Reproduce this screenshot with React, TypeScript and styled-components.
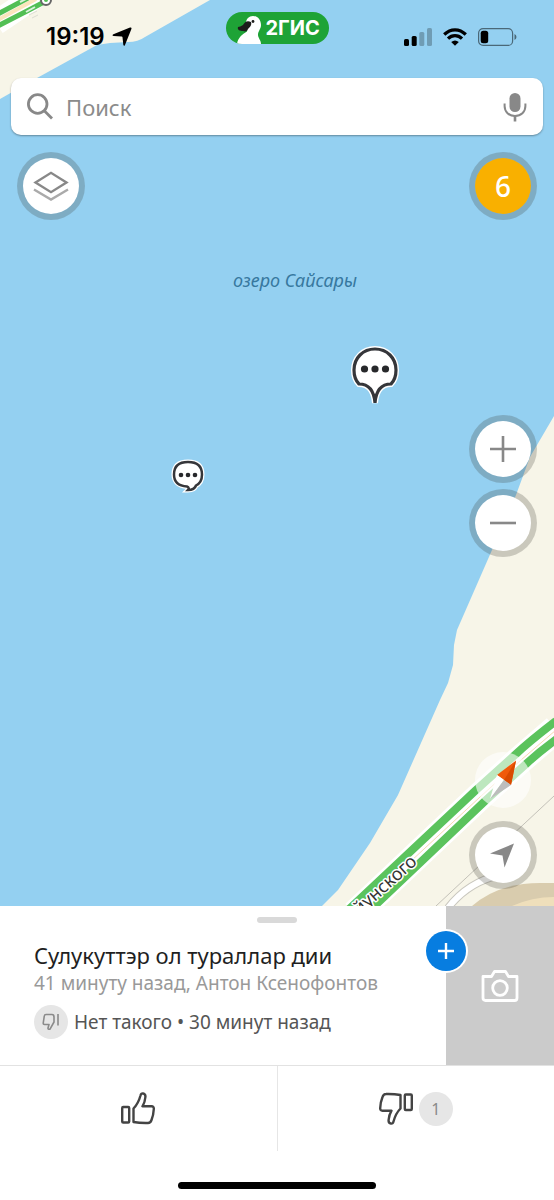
import React from "react";
import styled, { createGlobalStyle } from "styled-components";

const GlobalStyle = createGlobalStyle`
  * { box-sizing: border-box; }
  body { margin: 0; background: #fff; font-family: "Noto Sans", sans-serif; }
  button, input { font: inherit; color: inherit; border: 0; padding: 0; background: none; }
  button { cursor: pointer; }
  svg { display: block; flex: none; }
`;

const Page = styled.div`
  display: flex;
  flex-direction: column;
  min-height: 100vh;
`;

const MapArea = styled.main`
  position: relative;
  flex: 1;
  display: flex;
  flex-direction: column;
  overflow: hidden;
  background: #94d0f1;
`;

const MapDrawing = styled.svg`
  position: absolute;
  inset: 0;
  width: 100%;
  height: 100%;
`;

const StatusBar = styled.header`
  position: relative;
  display: grid;
  grid-template-columns: 1fr auto 1fr;
  height: 78px;
  padding-top: 12px;
`;

const StatusSide = styled.div<{ $end?: boolean }>`
  display: flex;
  align-items: center;
  justify-content: ${(p) => (p.$end ? "flex-end" : "flex-start")};
  gap: ${(p) => (p.$end ? 11 : 7)}px;
  height: 50px;
  padding: ${(p) => (p.$end ? "0 37px 0 0" : "0 0 0 46px")};
`;

const Time = styled.time`
  font: 600 24px/28px Inter, sans-serif;
  color: #000;
`;

const AppPill = styled.a`
  display: flex;
  align-items: center;
  width: 103px;
  height: 32px;
  border-radius: 16px;
  overflow: hidden;
  background: #1ea336;
  color: #fff;
  font: 700 20px/32px Inter, sans-serif;
  text-decoration: none;
`;

const SearchBar = styled.form`
  position: relative;
  display: flex;
  align-items: center;
  gap: 13px;
  height: 57px;
  margin: 0 11px;
  padding: 0 16px;
  border-radius: 10px;
  background: #fff;
  box-shadow: 0 1px 2px rgba(0, 0, 0, 0.35);
`;

const SearchInput = styled.input`
  flex: 1;
  min-width: 0;
  height: 100%;
  outline: 0;
  font-size: 22px;
  color: #333;
  &::placeholder { color: #8b8b8b; opacity: 1; }
`;

const Controls = styled.div`
  position: relative;
  flex: 1;
  display: flex;
  justify-content: space-between;
  padding: 17px;
`;

const ControlColumn = styled.div`
  display: flex;
  flex-direction: column;
  align-items: center;
  justify-content: space-between;
`;

const ControlGroup = styled.div<{ $gap: number }>`
  display: flex;
  flex-direction: column;
  align-items: center;
  gap: ${(p) => p.$gap}px;
`;

const RoundButton = styled.button<{ $fill?: string }>`
  display: flex;
  align-items: center;
  justify-content: center;
  width: 68px;
  height: 68px;
  border: 6px solid rgba(60, 60, 50, 0.24);
  border-radius: 50%;
  background: ${(p) => p.$fill || "#fff"};
  background-clip: padding-box;
  color: #fff;
  font-size: 28px;
  font-weight: 500;
  line-height: 56px;
`;

const CompassButton = styled.button`
  width: 56px;
  height: 56px;
  border-radius: 50%;
  background: rgba(255, 255, 255, 0.6);
`;

const Pin = styled.button<{ $x: number; $y: number }>`
  position: absolute;
  left: ${(p) => p.$x}%;
  top: ${(p) => p.$y}%;
  transform: translate(-50%, -50%);
`;

const Panel = styled.section`
  position: relative;
  background: #fff;
`;

const Handle = styled.div`
  position: absolute;
  top: 11px;
  left: 50%;
  width: 40px;
  height: 6px;
  margin-left: -20px;
  border-radius: 3px;
  background: #d9d9d9;
`;

const Summary = styled.div`
  display: flex;
  border-bottom: 1px solid #e2e2e2;
`;

const Info = styled.div`
  flex: 1;
  min-width: 0;
  padding: 35px 0 26px 34px;
`;

const Title = styled.h1`
  margin: 0;
  font-size: 22px;
  font-weight: 400;
  line-height: 28px;
  color: #1f1f1f;
`;

const Meta = styled.p`
  margin: 0 0 8px;
  font-size: 19px;
  line-height: 28px;
  color: #999;
`;

const Verdict = styled.div`
  display: flex;
  align-items: center;
  gap: 6px;
  font-size: 19px;
  line-height: 28px;
  color: #555;
`;

const Bubble = styled.span`
  display: flex;
  align-items: center;
  justify-content: center;
  width: 34px;
  height: 34px;
  border-radius: 50%;
  background: #e6e6e6;
  color: #8a8a8a;
  font-size: 16px;
`;

const Photo = styled.div`
  position: relative;
  display: flex;
  width: 108px;
  background: #cbcbcb;
`;

const PhotoButton = styled.button`
  flex: 1;
  display: flex;
  align-items: center;
  justify-content: center;
`;

const AddButton = styled.button`
  position: absolute;
  top: 25px;
  left: -20px;
  display: flex;
  align-items: center;
  justify-content: center;
  width: 40px;
  height: 40px;
  border-radius: 50%;
  background: #077de0;
  box-shadow: 0 0 0 2px #fff;
`;

const Actions = styled.div`
  display: flex;
`;

const Action = styled.button`
  flex: 1;
  display: flex;
  align-items: center;
  justify-content: center;
  gap: 6px;
  height: 85px;
  & + & { border-left: 1px solid #e6e6e6; }
`;

const HomeArea = styled.div`
  display: flex;
  justify-content: center;
  padding: 31px 0 11px;
`;

const HomeIndicator = styled.div`
  width: 198px;
  height: 7px;
  border-radius: 4px;
  background: #000;
`;

function CityMap() {
  return (
    <MapDrawing viewBox="0 0 554 906" preserveAspectRatio="xMidYMid slice" aria-hidden="true">
      <rect width="554" height="906" fill="#94d0f1" />
      <path d="M0 0H210L145 37Q138 42 128 42L110 43L97 45L37 78L0 99Z" fill="#f7f5e8" />
      <path d="M554 416L530 457L516 495L492 550L457 630L454 645L453 665L448 683L440 700L398 795L370 843L338 890L322 906H554Z" fill="#f7f5e8" />

      <g fill="none">
        <path d="M-4 23L36 -4" stroke="#fff" strokeWidth="24" />
        <path d="M-4 21L36 -1" stroke="#fbe5bd" strokeWidth="4" />
        <path d="M-4 15L28 -2" stroke="#52bf55" strokeWidth="5" />
        <path d="M-4 27L27 11L46 1" stroke="#52bf55" strokeWidth="5" />
        <path d="M20 2l8-4M26 12l9-5" stroke="#d9f2da" strokeWidth="2" />
        <path d="M29 15l8-4M32 18l6-3" stroke="#dddcd3" />
        <circle cx="46" cy="0" r="5" fill="#fff" stroke="#666" strokeWidth="2" />
        <circle cx="46" cy="0" r="2" fill="#52bf55" />
      </g>

      <g fill="none">
        <path d="M436 906L554 796" stroke="#c3c1b8" />
        <path d="M448 908Q468 882 500 875T554 862" stroke="#c9c7be" strokeWidth="8" />
        <path d="M448 908Q468 882 500 875T554 862" stroke="#fff" strokeWidth="6" />
        <path d="M508 856H554V884Q530 880 508 886Z" fill="#f7f5e8" />
        <path d="M472 906Q498 883 540 883H554V906Z" fill="#d9ccae" />
        <path d="M512 906Q532 897 554 897V906Z" fill="#efdfbb" />
      </g>

      <g fill="none">
        <path d="M556 729L521 759L480 796L355 914" stroke="#fff" strokeWidth="28" />
        <path d="M556 721Q530 741 516 754L475 791L346 912" stroke="#5bc35d" strokeWidth="8" />
        <path d="M558 738Q540 751 526 764L485 801L364 916" stroke="#5bc35d" strokeWidth="8" />
        <path d="M556 730L521 760L480 797L410 862" stroke="#f7d9b0" />
      </g>
      <text
        transform="translate(418 863) rotate(-42)"
        textAnchor="end"
        fontFamily="Noto Sans, sans-serif"
        fontSize="18"
        fill="#333"
        stroke="#fff"
        strokeWidth="3"
        strokeLinejoin="round"
        paintOrder="stroke"
      >
        Ойунского
      </text>
      <text
        x="295"
        y="287"
        textAnchor="middle"
        fontFamily="Noto Sans, sans-serif"
        fontSize="18"
        fontStyle="italic"
        fill="#37789f"
      >
        озеро Сайсары
      </text>
    </MapDrawing>
  );
}

function LargePinIcon() {
  const shape =
    "M25 3C13 3 4 12 4 24C4 30 6 35 9 38C18 38 24 44 25 57C26 44 32 38 41 38C44 35 46 30 46 24C46 12 37 3 25 3Z";
  return (
    <svg width="50" height="60" viewBox="0 0 50 60" fill="none">
      <path d={shape} stroke="#fff" strokeWidth="6" />
      <path d={shape} fill="#fff" stroke="#35363a" strokeWidth="3.200" />
      <g fill="#27282b">
        <circle cx="14.500" cy="23" r="3.600" />
        <circle cx="25" cy="23" r="3.600" />
        <circle cx="35.500" cy="23" r="3.600" />
      </g>
    </svg>
  );
}

function SmallPinIcon() {
  const shape =
    "M17 3C7 3 3 8 3 15.500C3 23 8 27 16 27.500C18 28 18 30 17 31C21 31 24 29.500 25 26.500C29 24.500 31 21 31 15.500C31 8 27 3 17 3Z";
  return (
    <svg width="34" height="36" viewBox="0 0 34 36" fill="none">
      <path d={shape} stroke="#fff" strokeWidth="5" />
      <path d={shape} fill="#fff" stroke="#35363a" strokeWidth="2.500" />
      <g fill="#27282b">
        <circle cx="10" cy="16" r="2.300" />
        <circle cx="17" cy="16" r="2.300" />
        <circle cx="24" cy="16" r="2.300" />
      </g>
    </svg>
  );
}

function ThumbIcon({ down }: { down?: boolean }) {
  return (
    <svg width="34" height="33" viewBox="0 0 34 33" fill="none" stroke="#444" strokeWidth="2.400" strokeLinejoin="round">
      <g transform={down ? "rotate(180 17 16.500)" : undefined}>
        <rect x="1.200" y="15" width="7" height="15.500" rx="1" />
        <path d="M12.500 16.500C16 13 18 9 19.500 3.500Q20 1.200 22 1.400Q24.700 2 24.400 5Q24 10 21.500 14.300H30.500Q33 14.300 32.800 17Q32.500 23 30.500 28Q29.500 31 27 31Q19 31.200 12.500 30Z" />
      </g>
    </svg>
  );
}

export default function App() {
  return (
    <>
      <GlobalStyle />
      <Page>
        <MapArea>
          <CityMap />
          <StatusBar>
            <StatusSide>
              <Time>19:19</Time>
              <svg width="20" height="20" viewBox="0 0 20 20" fill="#000">
                <path d="M18 .5Q20 0 19.400 2L13 18Q12 19.800 11.300 17.800L10.500 10.200Q10.400 9.500 9.700 9.400L1.700 8.900Q-.5 8.400 1.400 7.300Z" />
              </svg>
            </StatusSide>
            <AppPill href="#">
              <svg width="40" height="32" viewBox="0 0 40 32">
                <path d="M11 32C12 25 17 22 21 19.500C22 17 20 15 20 11C20 7 23 4 27 4C32 4 35 8 35 13C35 17 32 19 32 23C32 26 35 28 35 32Z" fill="#fff" />
                <path d="M25 10C21 8 19 10 17 13Q14 15 12 15C11 18 14 19 17 19C20 20 21 19 22 17C24 15 26 13 25 10Z" fill="#1d1d1b" />
                <circle cx="27" cy="9.500" r="1.400" fill="#1d1d1b" />
              </svg>
              2ГИС
            </AppPill>
            <StatusSide $end>
              <svg width="28" height="18" viewBox="0 0 28 18" fill="#000">
                <rect y="11" width="5" height="7" rx="1.500" />
                <rect x="7.700" y="8" width="5" height="10" rx="1.500" />
                <rect x="15.300" y="4" width="5" height="14" rx="1.500" opacity=".25" />
                <rect x="23" width="5" height="18" rx="1.500" opacity=".25" />
              </svg>
              <svg width="24" height="18" viewBox="0 0 24 18" fill="none" stroke="#000" strokeWidth="3.200">
                <path d="M1.200 6.500Q6 1.800 12 1.800T22.800 6.500" />
                <path d="M5 10.600Q8 7.600 12 7.600T19 10.600" />
                <path d="M8.200 14L12 17.800L15.800 14Q12 10.800 8.200 14Z" fill="#000" stroke="none" />
              </svg>
              <svg width="39" height="18" viewBox="0 0 39 18">
                <rect x=".6" y=".6" width="34" height="16.800" rx="4.500" fill="none" stroke="#000" strokeOpacity=".5" strokeWidth="1.200" />
                <rect x="2.700" y="2.700" width="7.500" height="12.600" rx="2.500" fill="#000" />
                <path d="M36.500 6Q38.500 7 38.500 9T36.500 12Z" opacity=".5" />
              </svg>
            </StatusSide>
          </StatusBar>

          <SearchBar role="search" onSubmit={(e) => e.preventDefault()}>
            <svg width="26" height="27" viewBox="0 0 26 27" fill="none" stroke="#888" strokeWidth="2.800">
              <circle cx="10.700" cy="11" r="9.300" />
              <path d="M17.300 17.800L25 25.500" />
            </svg>
            <SearchInput type="text" placeholder="Поиск" aria-label="Поиск" />
            <button type="button" aria-label="Голосовой поиск">
              <svg width="24" height="30" viewBox="0 0 24 30" fill="none" stroke="#888">
                <rect x="6.500" y="1" width="11" height="19" rx="5.500" fill="#888" stroke="none" />
                <path d="M1.600 11.500V14C1.600 20 6 24 12 24S22.400 20 22.400 14V11.500" strokeWidth="2" />
                <path d="M12 24V29.500" strokeWidth="2.600" />
              </svg>
            </button>
          </SearchBar>

          <Controls>
            <ControlColumn>
              <RoundButton aria-label="Слои">
                <svg width="36" height="32" viewBox="0 0 36 32" fill="none" strokeWidth="2.400">
                  <path d="M2.500 12.500L18 2.800L33.500 12.500L18 22.200Z" stroke="#888" />
                  <path d="M1 19.500L18 29.500L35 19.500" stroke="#aaa" />
                </svg>
              </RoundButton>
            </ControlColumn>
            <ControlColumn>
              <RoundButton $fill="#f9b000" aria-label="Пробки: 6 баллов">6</RoundButton>
              <ControlGroup $gap={6}>
                <RoundButton aria-label="Приблизить">
                  <svg width="26" height="26" viewBox="0 0 26 26" stroke="#888" strokeWidth="2.600">
                    <path d="M13 0V26M0 13H26" />
                  </svg>
                </RoundButton>
                <RoundButton aria-label="Отдалить">
                  <svg width="26" height="26" viewBox="0 0 26 26" stroke="#888" strokeWidth="2.600">
                    <path d="M0 13H26" />
                  </svg>
                </RoundButton>
              </ControlGroup>
              <ControlGroup $gap={13}>
                <CompassButton aria-label="Компас">
                  <svg width="56" height="56" viewBox="0 0 56 56">
                    <path d="M22 23L41 8.500L36 33Z" fill="#f05a0a" />
                    <path d="M29 28L41 8.500L36 33Z" fill="#d94a00" />
                    <path d="M22 23L15 47L29 28Z" fill="#fff" />
                    <path d="M29 28L15 47L36 33Z" fill="#bdbdbd" />
                  </svg>
                </CompassButton>
                <RoundButton aria-label="Моё местоположение">
                  <svg width="26" height="26" viewBox="0 0 26 26" fill="#888">
                    <path d="M24 1.500L14.500 25.500L12.500 13.500L0 11.500Z" />
                  </svg>
                </RoundButton>
              </ControlGroup>
            </ControlColumn>
          </Controls>

          <Pin $x={67.7} $y={41.5} aria-label="Комментарий на карте, выбран">
            <LargePinIcon />
          </Pin>
          <Pin $x={34} $y={52.7} aria-label="Комментарий на карте">
            <SmallPinIcon />
          </Pin>
        </MapArea>

        <Panel>
          <Summary>
            <Info>
              <Title>Сулукуттэр ол тураллар дии</Title>
              <Meta>41 минуту назад, Антон Ксенофонтов</Meta>
              <Verdict>
                <Bubble>
                  <svg width="18" height="18" viewBox="0 0 18 18" fill="none" stroke="#8a8a8a" strokeWidth="1.600" strokeLinejoin="round">
                    <path d="M4 1.500H10Q12 1.500 12 4V9L8 16.200Q5.800 16.700 6 15L7 11.500H2.500Q1 11.500 1.300 9.700L2.300 3Q2.500 1.500 4 1.500Z" />
                    <path d="M16 1V12.500" />
                  </svg>
                </Bubble>
                <span>Нет такого • 30 минут назад</span>
              </Verdict>
            </Info>
            <Photo>
              <PhotoButton aria-label="Добавить фото">
                <svg width="38" height="32" viewBox="0 0 38 32" fill="none" stroke="#fff" strokeWidth="2.800" strokeLinejoin="round">
                  <path d="M2 6.500H10.500L13.500 1.500H24.500L27.500 6.500H36V28Q36 30.500 33.500 30.500H4.500Q2 30.500 2 28Z" />
                  <circle cx="19" cy="18" r="7.300" />
                </svg>
              </PhotoButton>
              <AddButton aria-label="Добавить">
                <svg width="16" height="16" viewBox="0 0 16 16" stroke="#fff" strokeWidth="2.400">
                  <path d="M8 0V16M0 8H16" />
                </svg>
              </AddButton>
            </Photo>
          </Summary>
          <Actions>
            <Action aria-label="Нравится">
              <ThumbIcon />
            </Action>
            <Action aria-label="Не нравится, 1">
              <ThumbIcon down />
              <Bubble>1</Bubble>
            </Action>
          </Actions>
          <HomeArea>
            <HomeIndicator />
          </HomeArea>
          <Handle />
        </Panel>
      </Page>
    </>
  );
}
